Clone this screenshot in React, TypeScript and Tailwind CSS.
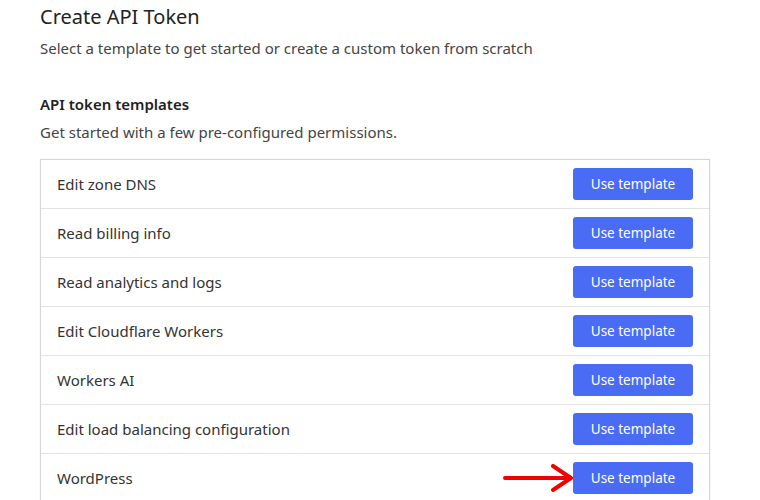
const templates = [
  "Edit zone DNS",
  "Read billing info",
  "Read analytics and logs",
  "Edit Cloudflare Workers",
  "Workers AI",
  "Edit load balancing configuration",
  "WordPress",
];

function Arrow() {
  return (
    <svg
      width="72"
      height="30"
      viewBox="0 0 72 30"
      className="absolute left-[-70px] top-[2px]"
    >
      <path
        d="M2 14 H68 M50 2 L68 14 L50 26"
        fill="none"
        stroke="#f00000"
        strokeWidth="4"
        strokeLinecap="round"
        strokeLinejoin="round"
      />
    </svg>
  );
}

export default function App() {
  return (
    <div className="min-h-screen bg-white pl-[40px] pr-[50px] pt-[4px] font-['Noto_Sans',sans-serif] text-[#333]">
      <h1 className="text-[20px] leading-[26px] text-[#222]">Create API Token</h1>
      <p className="mt-[8px] text-[15px] leading-[20px] text-[#444]">
        Select a template to get started or create a custom token from scratch
      </p>

      <h2 className="mt-[36px] text-[15px] font-semibold leading-[20px] text-[#222]">
        API token templates
      </h2>
      <p className="mt-[8px] text-[15px] leading-[20px] text-[#444]">
        Get started with a few pre-configured permissions.
      </p>

      <div className="mt-[17px] w-[670px] border border-[#d6d6d6] shadow-[0_0_2px_rgba(0,0,0,0.08)]">
        {templates.map((name, i) => (
          <div
            key={name}
            className={`flex items-center justify-between pl-[16px] pr-[16px] ${
              i > 0 ? "h-[49px] border-t border-[#e3e3e3]" : "h-[48px]"
            }`}
          >
            <span className="text-[15px] text-[#333]">{name}</span>
            <div className="relative">
              {name === "WordPress" && <Arrow />}
              <button className="h-[32px] w-[120px] rounded-[3px] bg-[#4a6cf4] text-[13.5px] text-white">
                Use template
              </button>
            </div>
          </div>
        ))}
      </div>
    </div>
  );
}
